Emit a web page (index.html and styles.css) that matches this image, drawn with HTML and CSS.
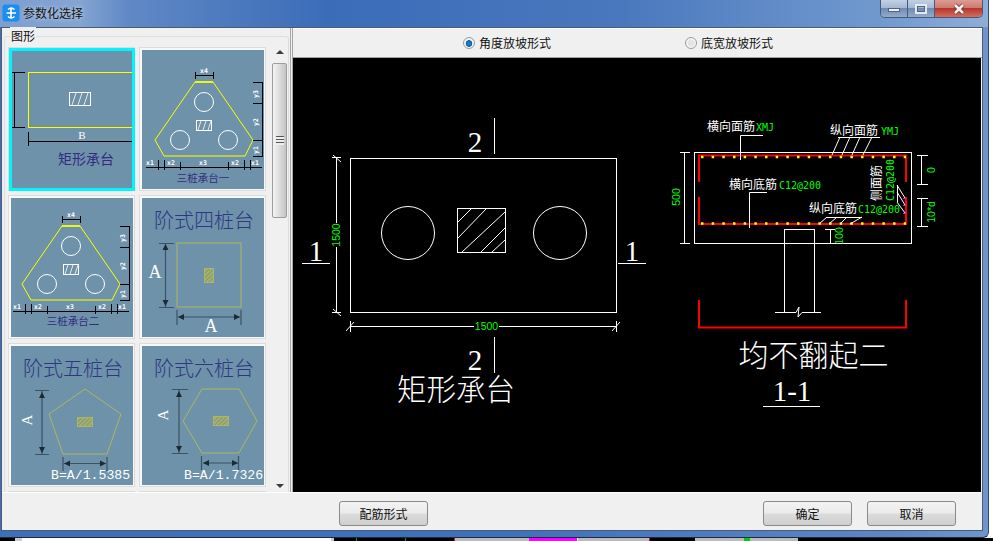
FILE: index.html
```html
<!DOCTYPE html>
<html lang="zh">
<head>
  <meta charset="UTF-8" />
  <title>参数化选择</title>
  <link rel="stylesheet" href="styles.css">
</head>
<body>
  <div class="window">
    <div class="titlebar">
      <svg class="app-icon" viewBox="0 0 18 18">
        <rect x="0.5" y="0.5" width="17" height="17" rx="3" fill="#1a8df0"/>
        <path d="M9 3.5V14.5M4.5 9H14M6 5.5A5 5 0 0 1 12.5 5.5M12.5 12.5A5 5 0 0 1 6 12.5" fill="none" stroke="#fff" stroke-width="1.6"/>
      </svg>
      <span class="title">参数化选择</span>
      <div class="win-buttons">
        <div class="win-btn">
          <span class="min-mark"></span>
        </div>
        <div class="win-btn">
          <span class="max-mark"></span>
        </div>
        <div class="win-btn close">
          <svg width="14" height="12" viewBox="0 0 14 12">
            <path d="M3 2L11 10M11 2L3 10" stroke="#6e2a24" stroke-width="4"/>
            <path d="M3 2L11 10M11 2L3 10" stroke="#f6f2f0" stroke-width="2.6"/>
          </svg>
        </div>
      </div>
    </div>

    <div class="client">
      <div class="main">
        <div class="left-panel">
          <div class="group">
            <span class="group-label">图形</span>
            <div class="thumbs">
              <div class="thumb selected">
                <svg viewBox="11 50 122 139">
                  <defs>
                    <pattern id="hatch" width="3" height="3" patternUnits="userSpaceOnUse" patternTransform="rotate(45)">
                      <rect width="3" height="3" fill="#7f9a8c"/>
                      <rect width="1.4" height="3" fill="#b8b850"/>
                    </pattern>
                  </defs>
                  <rect class="yl" x="28.5" y="72.5" width="110" height="55"/>
                  <rect class="wh" x="69.5" y="92.5" width="21" height="13"/>
                  <path class="wh thin" d="M72 105L76 93M78 105L82 93M84 105L88 93"/>
                  <path class="bk" d="M14.5 72V127M11 72.5H25M11 127.5H25M28.5 132V146M28 141.5H133"/>
                  <text class="t-b" x="82" y="139" text-anchor="middle">B</text>
                  <text class="t-title-sm" x="86" y="164" text-anchor="middle">矩形承台</text>
                </svg>
              </div>
              <div class="thumb">
                <svg viewBox="142 50 122 139">
                  <g id="pile3">
                    <path class="yl" d="M195 82H213L253 140L245 156H164L155 140Z"/>
                    <path class="yl thick" d="M195 82H213"/>
                    <circle class="wh" cx="204" cy="102" r="9.5"/>
                    <circle class="wh" cx="180" cy="140" r="9.5"/>
                    <circle class="wh" cx="228" cy="140" r="9.5"/>
                    <rect class="wh" x="196.5" y="120.5" width="15" height="10"/>
                    <path class="wh thin" d="M198 130L201 121M203 130L206 121M208 130L211 121"/>
                    <path class="bk" d="M196 75.5H213M195.5 72V79M213.5 72V79M262.5 82V156M253 82.5H263M253 103.5H263M253 140.5H263M253 156.5H263M146 167.5H262M158.5 160V170M164.5 160V170M180.5 162V170M228.5 162V170M244.5 160V170M250.5 160V170"/>
                    <text class="t-sm" x="204" y="73" text-anchor="middle">x4</text>
                    <text class="t-sm" x="150" y="165" text-anchor="middle">x1</text>
                    <text class="t-sm" x="171" y="165" text-anchor="middle">x2</text>
                    <text class="t-sm" x="203" y="165" text-anchor="middle">x3</text>
                    <text class="t-sm" x="235" y="165" text-anchor="middle">x2</text>
                    <text class="t-sm" x="255" y="165" text-anchor="middle">x1</text>
                    <text class="t-sm" transform="translate(258 94) rotate(-90)" text-anchor="middle">y3</text>
                    <text class="t-sm" transform="translate(258 122) rotate(-90)" text-anchor="middle">y2</text>
                    <text class="t-sm" transform="translate(258 150) rotate(-90)" text-anchor="middle">y1</text>
                  </g>
                  <text class="t-cap" x="203" y="182" text-anchor="middle">三桩承台一</text>
                </svg>
              </div>
              <div class="thumb">
                <svg viewBox="11 198 122 139">
                  <use href="#pile3" transform="translate(-133 144)"/>
                  <text class="t-cap" x="73" y="325" text-anchor="middle">三桩承台二</text>
                </svg>
              </div>
              <div class="thumb">
                <svg viewBox="142 198 122 139">
                  <text class="t-title" x="204" y="228" text-anchor="middle">阶式四桩台</text>
                  <rect class="ol" x="177" y="243" width="64" height="64"/>
                  <rect class="ol fill" x="204.5" y="268.5" width="9" height="14"/>
                  <path class="sl" d="M165.5 243V307M159 243.5H174M159 307.5H174M177 310V325M241 310V325M178 317H240"/>
                  <path class="ar" d="M165.5 244L162.5 250H168.5ZM165.5 306L162.5 300H168.5ZM178 317L184 314V320ZM240 317L234 314V320Z"/>
                  <text class="t-a" x="155" y="278" text-anchor="middle">A</text>
                  <text class="t-a" x="211" y="332" text-anchor="middle">A</text>
                </svg>
              </div>
              <div class="thumb">
                <svg viewBox="11 346 122 139">
                  <text class="t-title" x="73" y="376" text-anchor="middle">阶式五桩台</text>
                  <path class="ol" d="M85 389L121 414L107 454H63L49 414Z"/>
                  <rect class="ol fill" x="77.5" y="417.5" width="15" height="9"/>
                  <path class="sl" d="M42 391V454M35 390.5H49M35 454.5H49M63 457V471M107 457V471M64 463.5H106"/>
                  <path class="ar" d="M42 392L39 398H45ZM42 453L39 447H45ZM64 463.5L70 460.5V466.5ZM106 463.5L100 460.5V466.5Z"/>
                  <text class="t-a sm" transform="translate(32 420) rotate(-90)" text-anchor="middle">A</text>
                  <text class="t-eq" x="51" y="479">B=A/1.5385</text>
                </svg>
              </div>
              <div class="thumb">
                <svg viewBox="142 346 122 139">
                  <text class="t-title" x="204" y="376" text-anchor="middle">阶式六桩台</text>
                  <path class="ol" d="M202 389H239L257 421L239 453H202L183 421Z"/>
                  <rect class="ol fill" x="213.5" y="416.5" width="15" height="9"/>
                  <path class="sl" d="M179 390V453M172 389.5H188M172 453.5H188M201.5 456V470M238.5 456V470M203 463H238"/>
                  <path class="ar" d="M179 391L176 397H182ZM179 452L176 446H182ZM203 463L209 460V466ZM238 463L232 460V466Z"/>
                  <text class="t-a sm" transform="translate(168 415) rotate(-90)" text-anchor="middle">A</text>
                  <text class="t-eq" x="184" y="479">B=A/1.7326</text>
                </svg>
              </div>
              <div class="thumb"></div>
              <div class="thumb"></div>
            </div>
            <div class="scrollbar">
              <div class="sb-arrow"><span class="tri-up"></span></div>
              <div class="sb-thumb">
                <span class="grip"></span>
              </div>
              <div class="sb-arrow end"><span class="tri-down"></span></div>
            </div>
          </div>
        </div>

        <div class="right-panel">
          <div class="radio-bar">
            <label class="radio-item">
              <span class="radio on"></span>角度放坡形式
            </label>
            <label class="radio-item">
              <span class="radio"></span>底宽放坡形式
            </label>
          </div>
          <svg class="canvas" viewBox="293 58 688 434">
            <!-- plan -->
            <rect class="ln" x="350.5" y="158.5" width="266" height="154"/>
            <circle class="ln" cx="408" cy="233" r="26.5"/>
            <circle class="ln" cx="560" cy="233" r="26.5"/>
            <rect class="ln" x="457.5" y="208.5" width="48" height="44"/>
            <path class="ln" d="M458 222L471 209M458 238L486 209M462 252L505 212M481 252L505 228M492 252L505 240"/>
            <path class="ln" d="M494.5 118V154M494.5 337V373M302 263.5H330M618 263.5H646"/>
            <path class="ln" d="M336.5 158V312M332 157.5H341M332 312.5H341M333 155L341 162M333 309L341 316M350 326.5H616M350.5 321V332M616.5 321V332M346 331L354 322M612 331L620 322"/>
            <rect class="mask" x="474" y="320" width="25" height="13"/>
            <rect class="mask" x="330" y="223" width="13" height="24"/>
            <text class="num" x="475" y="152" text-anchor="middle">2</text>
            <text class="num" x="475" y="370" text-anchor="middle">2</text>
            <text class="num" x="316" y="261" text-anchor="middle">1</text>
            <text class="num" x="632" y="261" text-anchor="middle">1</text>
            <text class="grn" x="486.5" y="330" text-anchor="middle">1500</text>
            <text class="grn" transform="translate(340 235) rotate(-90)" text-anchor="middle">1500</text>
            <text class="big" x="456" y="400" text-anchor="middle">矩形承台</text>

            <!-- section -->
            <rect class="ln" x="694.5" y="152.5" width="217" height="91"/>
            <path class="red" d="M699 182V155.5H906V182M699 197V224H906V197"/>
            <path class="red" d="M699 300V327.5H906V300"/>
            <path class="dots" d="M701 157H906M701 223.5H906"/>
            <path class="mg" d="M904.5 198V199M904.5 205V206M904.5 213V214"/>
            <path class="ln" d="M784.5 229.5H814.5M784.5 229V312M814.5 229V312M775 312.5H796L799 307L798 317L802 312.5H821"/>
            <path class="ln" d="M684.5 152V243M680 152.5H690M680 243.5H690M830.5 229V243M825 229.5H835M827 243.5H834"/>
            <path class="ln" d="M921.5 155V184M921.5 198V226M917 155.5H928M917 184.5H928M917 198.5H928M917 226.5H928"/>
            <path class="ln" d="M740.5 160V135.5H763M749.5 228V192.5H767"/>
            <path class="ln" d="M880 137.5H838M840 137L832 155M850 137L842 155M860 137L852 155M872 137L863 155"/>
            <path class="ln" d="M862 217.5H827M827 217L819 224M837 217L829 224M847 217L840 224M862 217L850 224"/>
            <path class="ln" d="M897.5 185V202M897 185L905 198M897 192L905 205M897 202L905 213"/>
            <text class="lbl" x="707" y="131">横向面筋</text>
            <text class="grn sm" x="756" y="131">XMJ</text>
            <text class="lbl" x="830" y="135">纵向面筋</text>
            <text class="grn sm" x="881" y="135">YMJ</text>
            <text class="lbl" x="729" y="189">横向底筋</text>
            <text class="grn sm" x="779" y="189">C12@200</text>
            <text class="lbl" x="809" y="213">纵向底筋</text>
            <text class="grn sm" x="858" y="213">C12@200</text>
            <text class="lbl" transform="translate(881 201) rotate(-90)">侧面筋</text>
            <text class="grn sm" transform="translate(894 201) rotate(-90)">C12@200</text>
            <text class="grn" transform="translate(680 197) rotate(-90)" text-anchor="middle">500</text>
            <text class="grn" transform="translate(843 236) rotate(-90)" text-anchor="middle">100</text>
            <text class="grn" transform="translate(935 170) rotate(-90)" text-anchor="middle">0</text>
            <text class="grn" transform="translate(935 212) rotate(-90)" text-anchor="middle">10*d</text>
            <text class="big wide" x="813.5" y="366" text-anchor="middle">均不翻起二</text>
            <text class="num" x="792" y="401" text-anchor="middle">1-1</text>
            <path class="ln" d="M763 406.5H820"/>
          </svg>
        </div>
      </div>

      <div class="footer">
        <button class="btn">配筋形式</button>
        <button class="btn push">确定</button>
        <button class="btn">取消</button>
      </div>
    </div>
  </div>
  <div class="strip"></div>
</body>
</html>
```

FILE: styles.css
```css
* {
  box-sizing: border-box;
}

html, body {
  margin: 0;
  padding: 0;
}

body {
  width: 993px;
  height: 541px;
  overflow: hidden;
  background: #fff;
  font-family: "Noto Sans CJK SC", "Liberation Sans", sans-serif;
  font-size: 12px;
  color: #111;
}

.window {
  width: 989px;
  height: 538px;
  display: flex;
  flex-direction: column;
  background: linear-gradient(90deg, #3f6fb9, #3e70bb 50%, #5c86c4 90%, #6f96cc);
  border-radius: 0 0 6px 0;
  border-right: 1px solid #3a4a66;
  border-bottom: 1px solid #1b2a44;
}

.titlebar {
  height: 27px;
  flex: none;
  display: flex;
  align-items: flex-start;
  background: linear-gradient(90deg, #7d9fd0 0, #84a4d2 80px, #5f88c5 130px, #3b6cb8 330px, #4a78be 620px, #7099ce 880px, #8eaed8 989px);
}

.app-icon {
  width: 18px;
  height: 18px;
  margin: 4px 0 0 2px;
}

.title {
  margin: 4px 0 0 3px;
  font-size: 12px;
  line-height: 17px;
  text-shadow: 0 0 4px rgba(255, 255, 255, 0.7);
}

.win-buttons {
  margin-left: auto;
  margin-right: 5px;
  display: flex;
  height: 18px;
  width: 103px;
  border: 1px solid #46597a;
  border-top: none;
  border-radius: 0 0 5px 5px;
  overflow: hidden;
}

.win-btn {
  width: 27px;
  display: flex;
  align-items: center;
  justify-content: center;
  border-right: 1px solid #46597a;
  background: linear-gradient(#c3d0e4, #a4b8d6 45%, #6f8bb5 50%, #93abcd);
}

.win-btn.close {
  flex: 1;
  border-right: none;
  background: linear-gradient(#dc9c94, #cf7a70 45%, #b8352a 50%, #d0705f);
}

.min-mark {
  width: 12px;
  height: 4px;
  margin-top: 3px;
  background: #eef1f5;
  border: 1px solid #55647c;
}

.max-mark {
  width: 12px;
  height: 10px;
  border: 2px solid #e6eaf0;
  outline: 1px solid #55647c;
  outline-offset: -3px;
}

.client {
  flex: 1;
  display: flex;
  flex-direction: column;
  margin: 0 5px 6px 1px;
  background: #f0f0f0;
  border: 1px solid #4d5a70;
  min-height: 0;
}

.main {
  height: 464px;
  flex: none;
  display: flex;
}

.left-panel {
  width: 289px;
  flex: none;
  border-right: 1px solid #a6a6a6;
  padding: 8px 0 0 2px;
}

.group {
  position: relative;
  height: 456px;
  width: 285px;
  display: flex;
  gap: 6px;
  padding: 10px 0 0 3px;
  border: 1px solid #d8dfe3;
  border-bottom: none;
  border-radius: 3px 3px 0 0;
}

.group-label {
  position: absolute;
  top: -10px;
  left: 5px;
  padding: 0 1px;
  background: #f0f0f0;
  line-height: 17px;
}

.thumbs {
  width: 258px;
  flex: none;
  display: grid;
  grid-template-columns: 127px 127px;
  grid-auto-rows: 144px;
  gap: 4px;
  overflow: hidden;
}

.thumb {
  border: 1px solid #dcdcdc;
  padding: 2px 1px 1px 2px;
  background: #f8f8f8;
}

.thumb svg {
  display: block;
  width: 122px;
  height: 139px;
  background: #6d92a9;
  overflow: hidden;
}

.thumb.selected svg {
  outline: 3px solid #00f5ff;
  outline-offset: -1px;
}

.scrollbar {
  width: 15px;
  flex: none;
  display: flex;
  flex-direction: column;
  background: #f0f0f0;
}

.sb-arrow {
  height: 16px;
  flex: none;
  display: flex;
  align-items: center;
  justify-content: center;
  padding-bottom: 6px;
}

.sb-arrow.end {
  margin-top: auto;
  padding: 4px 0 0;
}

.tri-up {
  border: 4px solid transparent;
  border-top: none;
  border-bottom: 4px solid #3c3c3c;
}

.tri-down {
  border: 4px solid transparent;
  border-bottom: none;
  border-top: 4px solid #3c3c3c;
}

.sb-thumb {
  height: 155px;
  display: flex;
  align-items: center;
  justify-content: center;
  border: 1px solid #9c9c9c;
  border-radius: 2px;
  background: linear-gradient(90deg, #f4f4f4, #dedede 45%, #c4c4c8);
}

.grip {
  width: 8px;
  height: 9px;
  background: repeating-linear-gradient(#555 0 1px, #eee 1px 3px);
}

.right-panel {
  flex: 1;
  margin-left: 1px;
  display: flex;
  flex-direction: column;
  border-left: 1px solid #a6a6a6;
  min-width: 0;
}

.radio-bar {
  height: 30px;
  flex: none;
  display: flex;
  align-items: center;
  gap: 134px;
  padding-left: 170px;
  border-top: 1px solid #fff;
  border-bottom: 1px solid #a0a0a0;
}

.radio-item {
  display: flex;
  align-items: center;
  gap: 4px;
  line-height: 16px;
}

.radio {
  width: 12px;
  height: 12px;
  border-radius: 50%;
  border: 1px solid #9a9a9a;
  background: radial-gradient(circle, #e4e4e4 0 3px, #f6f6f6 4px);
}

.radio.on {
  background: radial-gradient(circle at 50% 55%, #1a8ee0 0, #0b5fa8 3px, #f2f2f2 3.6px);
}

.canvas {
  display: block;
  width: 688px;
  height: 434px;
  background: #000;
}

.footer {
  flex: 1;
  display: flex;
  align-items: flex-start;
  gap: 15px;
  padding: 8px 26px 0 337px;
  border-top: 1px solid #fff;
}

.btn {
  width: 89px;
  height: 25px;
  padding: 0;
  font: inherit;
  color: #111;
  border: 1px solid #8a8a8a;
  border-radius: 3px;
  background: linear-gradient(#f2f2f2, #ebebeb 48%, #dcdcdc 52%, #cfcfcf);
}

.btn.push {
  margin-left: auto;
}

.strip {
  height: 3px;
  background: linear-gradient(90deg, #000 0 15px, #ccc 15px 22px, #fff 22px 331px, #ccc 331px 334px, #000 334px 356px, #0a0 356px 357px, #000 357px 405px, #0a0 405px 406px, #000 406px 454px, #f00 454px 455px, #bbb 455px 529px, #f0f 529px 577px, #fff 577px 578px, #bbb 578px 649px, #f00 649px 650px, #000 650px 695px, #bbb 695px 744px, #0c0 744px 750px, #bbb 750px 798px, #000 798px);
}

/* thumbnails */
.yl, .wh, .ol, .ln, .bk, .sl, .red, .dots, .mg {
  fill: none;
}

.yl {
  stroke: #ffff00;
  stroke-width: 1;
}

.yl.thick {
  stroke-width: 1.6;
}

.wh {
  stroke: #fff;
  stroke-width: 1;
}

.thin {
  stroke-width: 0.8;
}

.bk {
  stroke: #000;
  stroke-width: 1;
}

.ol {
  stroke: #b0b560;
  stroke-width: 1;
}

.ol.fill {
  fill: url(#hatch);
}

.sl {
  stroke: #3b5366;
  stroke-width: 1.2;
}

.ar {
  fill: #1d2a33;
}

.t-sm {
  font: bold 6.5px "DejaVu Sans Mono", monospace;
  fill: #fff;
}

.t-b {
  font: 11px "Liberation Serif", serif;
  fill: #fff;
}

.t-cap {
  font-size: 10.5px;
  fill: #352a80;
}

.t-title-sm {
  font-size: 14px;
  fill: #352a80;
}

.t-title {
  font-size: 20px;
  font-weight: 300;
  fill: #2f3784;
}

.t-a {
  font: 18px "Liberation Serif", serif;
  fill: #fff;
}

.t-a.sm {
  font-size: 15px;
}

.t-eq {
  font: 13.2px "Liberation Mono", monospace;
  fill: #fff;
}

/* drawing */
.ln {
  stroke: #fff;
  stroke-width: 1;
}

.red {
  stroke: #ff0000;
  stroke-width: 2;
}

.dots {
  stroke: #ffff00;
  stroke-width: 2.5;
  stroke-dasharray: 2.5 8.17;
}

.mg {
  stroke: #ff00ff;
  stroke-width: 3;
}

.mask {
  fill: #000;
}

.num {
  font: 29px "Liberation Serif", serif;
  fill: #fff;
}

.big {
  font-size: 29.5px;
  font-weight: 300;
  fill: #fff;
}

.big.wide {
  font-size: 30px;
}

.grn {
  font: 10.5px "Liberation Sans", sans-serif;
  fill: #00ff00;
}

.grn.sm {
  font: 10px "DejaVu Sans Mono", monospace;
}

.lbl {
  font-size: 12px;
  fill: #fff;
}
```
